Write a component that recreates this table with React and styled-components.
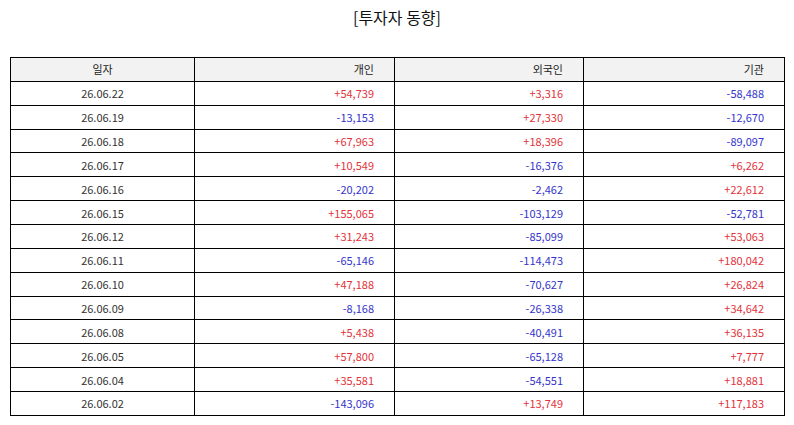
import React from "react";
import styled, { createGlobalStyle } from "styled-components";

const Global = createGlobalStyle`
  html, body { margin: 0; padding: 0; background: #fff; }
  body { font-family: "Noto Sans CJK KR", "Noto Sans", sans-serif; color: #222; }
`;

const Page = styled.div`
  padding: 0 10px;
  display: flex;
  flex-direction: column;
`;

const Title = styled.h1`
  margin: 0;
  height: 57px;
  padding-top: 5px;
  box-sizing: border-box;
  font-size: 16px;
  font-weight: 400;
  line-height: 24px;
  text-align: center;
  color: #111;
`;

const Table = styled.table`
  width: 774px;
  border-collapse: collapse;
  table-layout: fixed;
  font-size: 11px;
`;

const Th = styled.th`
  height: 22.87px;
  padding: 0 20px 0 0;
  border: 1px solid #000;
  background: #f2f2f2;
  font-weight: 400;
  color: #222;
  text-align: ${(p) => (p.$center ? "center" : "right")};
  ${(p) => p.$center && "padding-right: 0;"}
`;

const Td = styled.td`
  height: 22.87px;
  padding: 0 20px 0 0;
  border: 1px solid #000;
  text-align: ${(p) => (p.$center ? "center" : "right")};
  ${(p) => p.$center && "padding-right: 0;"}
  color: ${(p) => (p.$tone === "up" ? "#e2323a" : p.$tone === "down" ? "#3434cc" : "#333")};
`;

const rows = [
  ["26.06.22", "+54,739", "+3,316", "-58,488"],
  ["26.06.19", "-13,153", "+27,330", "-12,670"],
  ["26.06.18", "+67,963", "+18,396", "-89,097"],
  ["26.06.17", "+10,549", "-16,376", "+6,262"],
  ["26.06.16", "-20,202", "-2,462", "+22,612"],
  ["26.06.15", "+155,065", "-103,129", "-52,781"],
  ["26.06.12", "+31,243", "-85,099", "+53,063"],
  ["26.06.11", "-65,146", "-114,473", "+180,042"],
  ["26.06.10", "+47,188", "-70,627", "+26,824"],
  ["26.06.09", "-8,168", "-26,338", "+34,642"],
  ["26.06.08", "+5,438", "-40,491", "+36,135"],
  ["26.06.05", "+57,800", "-65,128", "+7,777"],
  ["26.06.04", "+35,581", "-54,551", "+18,881"],
  ["26.06.02", "-143,096", "+13,749", "+117,183"],
];

const tone = (v) => (v.startsWith("+") ? "up" : v.startsWith("-") ? "down" : "");

export default function App() {
  return (
    <>
      <Global />
      <Page>
        <Title>[투자자 동향]</Title>
        <Table>
          <colgroup>
            <col style={{ width: 184 }} />
            <col style={{ width: 200 }} />
            <col style={{ width: 189 }} />
            <col style={{ width: 201 }} />
          </colgroup>
          <thead>
            <tr>
              <Th $center>일자</Th>
              <Th>개인</Th>
              <Th>외국인</Th>
              <Th>기관</Th>
            </tr>
          </thead>
          <tbody>
            {rows.map((r) => (
              <tr key={r[0]}>
                <Td $center>{r[0]}</Td>
                <Td $tone={tone(r[1])}>{r[1]}</Td>
                <Td $tone={tone(r[2])}>{r[2]}</Td>
                <Td $tone={tone(r[3])}>{r[3]}</Td>
              </tr>
            ))}
          </tbody>
        </Table>
      </Page>
    </>
  );
}
